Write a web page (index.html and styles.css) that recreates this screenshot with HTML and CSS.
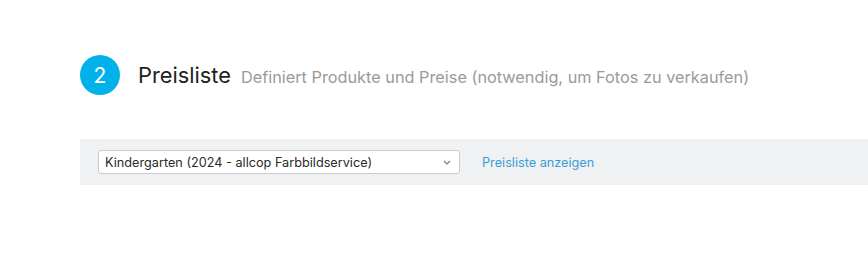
FILE: index.html
```html
<!DOCTYPE html>
<html lang="de">
<head>
<meta charset="utf-8">
<link rel="stylesheet" href="styles.css">
</head>
<body>
<div class="page">
  <div class="step-header">
    <span class="step-num">2</span>
    <h2 class="step-title">Preisliste</h2>
    <span class="step-desc">Definiert Produkte und Preise (notwendig, um Fotos zu verkaufen)</span>
  </div>
  <div class="bar">
    <div class="select">
      <span class="select-text">Kindergarten (2024 - allcop Farbbildservice)</span>
      <svg class="chev" width="8" height="5" viewBox="0 0 8 5"><path d="M1 1 L4 4 L7 1" fill="none" stroke="#777" stroke-width="1.1"/></svg>
    </div>
    <a class="link" href="#">Preisliste anzeigen</a>
  </div>
</div>
</body>
</html>
```
FILE: styles.css
```css
html, body { margin: 0; padding: 0; background: #fff; }
body { font-family: Inter, "Noto Sans", sans-serif; }
.page { padding: 55px 0 0 80px; }
.step-header { display: flex; align-items: center; height: 40px; }
.step-num {
  width: 40px; height: 40px; border-radius: 50%;
  background: #00b2e9; color: #fff;
  display: flex; align-items: center; justify-content: center;
  font-size: 21px; flex: none;
}
.step-title { margin: 0 0 0 18px; font-size: 21.8px; font-weight: 400; color: #1f1f1f; }
.step-desc { margin-left: 10px; font-size: 16.3px; color: #9a9a9a; padding-top: 3px; }
.bar {
  margin-top: 44px; height: 46px; background: #f0f1f3;
  display: flex; align-items: center; padding-left: 18px;
}
.select {
  box-sizing: border-box; width: 362px; height: 24px;
  background: #fff; border: 1px solid #c9cbcf; border-radius: 3px;
  display: flex; align-items: center; justify-content: space-between;
  padding: 0 8px 0 6px;
}
.select-text { font-size: 12.7px; color: #2a2a2a; }
.link { margin-left: 22px; font-size: 12.7px; color: #3a9ed8; text-decoration: none; }
```
